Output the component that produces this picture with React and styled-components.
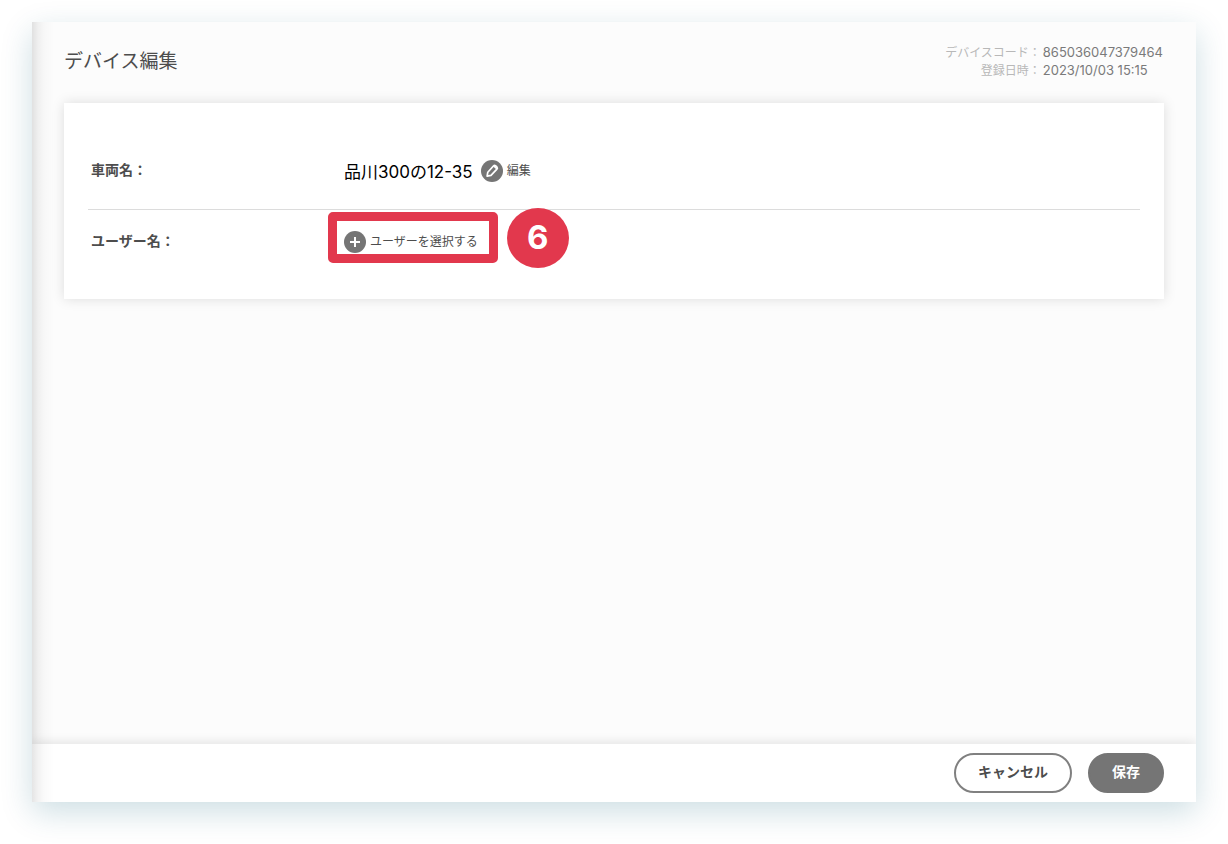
import React from "react";
import styled, { createGlobalStyle } from "styled-components";

const GlobalStyle = createGlobalStyle`
  * {
    box-sizing: border-box;
  }

  body {
    margin: 0;
    background: #fff;
    color: #4d4d4d;
    font-family: Inter, "Noto Sans CJK JP", sans-serif;
  }

  button {
    font-family: inherit;
    cursor: pointer;
  }
`;

const Page = styled.div`
  display: flex;
  min-height: 100vh;
  padding: 22px 32px 42px;
`;

const Panel = styled.div`
  display: flex;
  flex: 1;
  flex-direction: column;
  background: linear-gradient(to right, rgba(0, 0, 0, 0.11), rgba(0, 0, 0, 0.05) 6px, rgba(0, 0, 0, 0.02) 12px, transparent 22px), #fcfcfc;
  box-shadow: 0 10px 30px rgba(0, 90, 115, 0.2);
`;

const Header = styled.header`
  display: flex;
  justify-content: space-between;
  padding: 21px 32px 0;
`;

const Title = styled.h1`
  margin: 0;
  font-size: 19px;
  font-weight: 400;
  line-height: 38px;
`;

const Meta = styled.dl`
  display: grid;
  grid-template-columns: auto auto;
  align-content: start;
  column-gap: 2px;
  margin: 0;
  padding-right: 1px;
  line-height: 18px;
`;

const MetaLabel = styled.dt`
  padding-top: 1px;
  height: 18px;
  color: #b8b8b8;
  font-size: 12px;
  text-align: right;
`;

const MetaValue = styled.dd`
  margin: 0;
  color: #7a7a7a;
  font-size: 13px;
`;

const Main = styled.main`
  flex: 1;
  padding: 22px 32px;
`;

const Card = styled.section`
  padding: 27px 24px 25px;
  background: #fff;
  box-shadow: 0 0 12px rgba(0, 0, 0, 0.13);
`;

const Row = styled.div`
  display: grid;
  grid-template-columns: 253px 1fr;
  align-items: center;
  height: ${({ $last }) => ($last ? "64px" : "80px")};
  padding: ${({ $last }) => ($last ? "0 0 0 3px" : "2px 0 0 3px")};
  border-bottom: ${({ $last }) => ($last ? "none" : "1px solid #dcdcdc")};
`;

const Label = styled.span`
  padding-bottom: 4px;
  font-size: 14px;
  font-weight: 700;
`;

const Value = styled.div`
  display: flex;
  align-items: center;
  gap: 8px;
`;

const VehicleName = styled.span`
  color: #000;
  font-size: 17px;
`;

const IconButton = styled.button`
  display: flex;
  align-items: center;
  gap: 4px;
  padding: 0;
  border: 0;
  background: none;
  color: #4d4d4d;
  font-size: 12px;
  line-height: 22px;
`;

const Highlight = styled.div`
  position: relative;
`;

const Frame = styled.span`
  position: absolute;
  inset: -19px -20px -10px -16px;
  border: 9px solid #e2384d;
  border-radius: 5px;
  pointer-events: none;
`;

const Step = styled.span`
  position: absolute;
  top: -23px;
  left: calc(100% + 29px);
  display: flex;
  align-items: center;
  justify-content: center;
  width: 62px;
  height: 60px;
  padding-bottom: 2px;
  border-radius: 50%;
  background: #e2384d;
  color: #fff;
  font-size: 33px;
  font-weight: 700;
`;

const Footer = styled.footer`
  display: flex;
  align-items: center;
  justify-content: flex-end;
  gap: 16px;
  padding: 9px 32px;
  background: linear-gradient(to right, rgba(0, 0, 0, 0.1), rgba(0, 0, 0, 0.05) 6px, rgba(0, 0, 0, 0.02) 12px, transparent 22px), #fff;
  box-shadow: 0 -2px 10px rgba(0, 0, 0, 0.1);
  clip-path: inset(-20px 0 0 0);
`;

const PillButton = styled.button`
  height: 40px;
  padding: 0 22px 4px;
  border: 2px solid ${({ $primary }) => ($primary ? "#757575" : "#808080")};
  border-radius: 20px;
  background: ${({ $primary }) => ($primary ? "#757575" : "#fff")};
  color: ${({ $primary }) => ($primary ? "#fff" : "#4d4d4d")};
  font-size: 14px;
  font-weight: 700;
`;

const PencilIcon = () => (
  <svg width="22" height="22" viewBox="0 0 22 22" aria-hidden="true">
    <circle cx="11" cy="11" r="11" fill="#757575" />
    <path
      d="M6.1 16.2 L6.8 12.2 L12.4 6 Q13.5 4.9 14.7 5.9 L15.9 7 Q16.9 8.1 15.9 9.2 L10 15.4 Z"
      fill="none"
      stroke="#fff"
      strokeWidth="1.7"
      strokeLinejoin="round"
    />
    <path d="M12.2 6.4 L15.4 9.6 L16.3 8 L13.9 5.5 Z" fill="#fff" />
  </svg>
);

const PlusIcon = () => (
  <svg width="22" height="22" viewBox="0 0 22 22" aria-hidden="true">
    <circle cx="11" cy="11" r="11" fill="#757575" />
    <path d="M11 6V16M6 11H16" stroke="#fff" strokeWidth="2" />
  </svg>
);

const App = () => {
  return (
    <>
      <GlobalStyle />
      <Page>
        <Panel>
          <Header>
            <Title>デバイス編集</Title>
            <Meta>
              <MetaLabel>デバイスコード：</MetaLabel>
              <MetaValue>865036047379464</MetaValue>
              <MetaLabel>登録日時：</MetaLabel>
              <MetaValue>2023/10/03 15:15</MetaValue>
            </Meta>
          </Header>

          <Main>
            <Card>
              <Row>
                <Label>車両名：</Label>
                <Value>
                  <VehicleName>品川300の12-35</VehicleName>
                  <IconButton type="button">
                    <PencilIcon />
                    編集
                  </IconButton>
                </Value>
              </Row>
              <Row $last>
                <Label>ユーザー名：</Label>
                <Value>
                  <Highlight>
                    <IconButton type="button">
                      <PlusIcon />
                      ユーザーを選択する
                    </IconButton>
                    <Frame />
                    <Step>6</Step>
                  </Highlight>
                </Value>
              </Row>
            </Card>
          </Main>

          <Footer>
            <PillButton type="button">キャンセル</PillButton>
            <PillButton type="submit" $primary>保存</PillButton>
          </Footer>
        </Panel>
      </Page>
    </>
  );
};

export default App;
